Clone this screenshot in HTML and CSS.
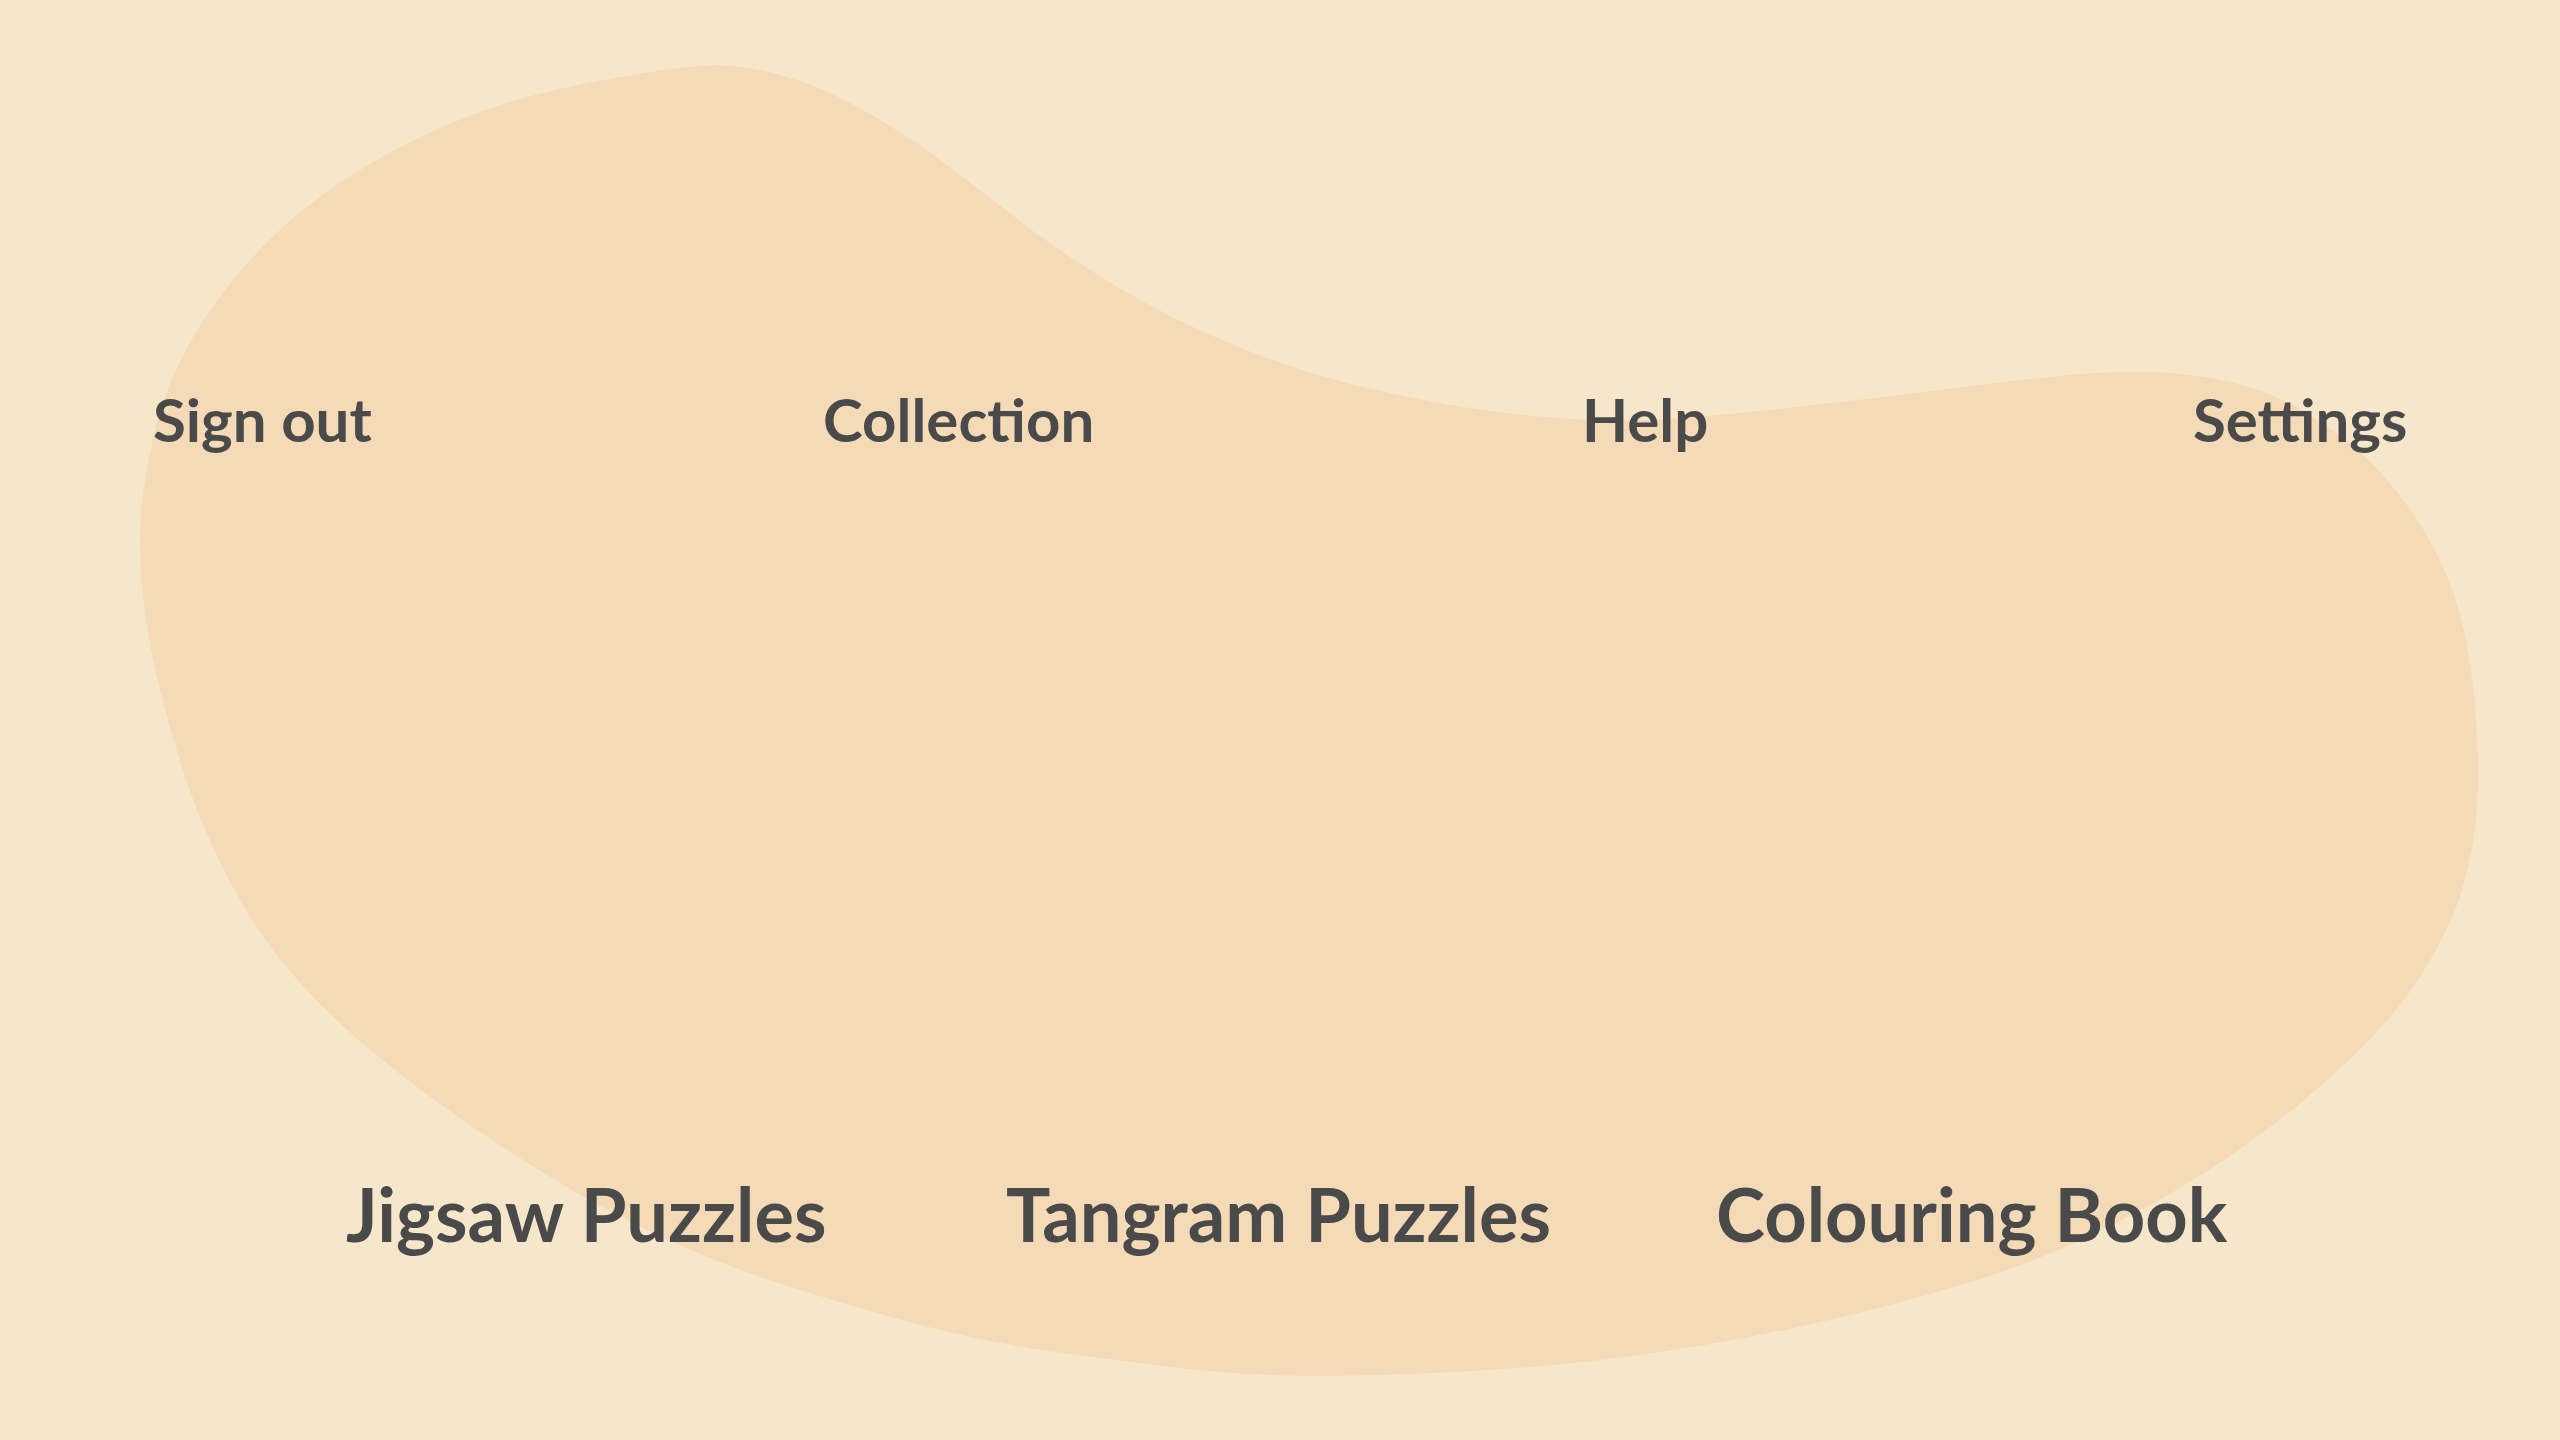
FILE: index.html
```html
<!DOCTYPE html>
<html lang="en">
<head>
<meta charset="utf-8">
<title>Puzzles</title>
<link rel="stylesheet" href="styles.css">
</head>
<body>
<div class="screen">
  <svg class="blob" width="2560" height="1440" viewBox="0 0 2560 1440" aria-hidden="true">
    <path fill="#F5DAB7" d="M620.5 77 Q702 62 734.5 66 Q767 70 800 81 Q833 92 873.5 116 Q914 140 947 165 Q980 190 1020.5 221.5 Q1061 253 1118.5 287.5 Q1176 322 1241 348 Q1306 374 1371.5 389 Q1437 404 1494 411.5 Q1551 419 1592 420 Q1633 421 1673.5 418.5 Q1714 416 1796 407 Q1878 398 1959.5 387.5 Q2041 377 2082 374 Q2123 371 2155.5 372 Q2188 373 2228.5 381.5 Q2269 390 2310 415 Q2351 440 2380.5 472.5 Q2410 505 2429.5 540 Q2449 575 2459.5 612.5 Q2470 650 2475 707 Q2480 764 2477 807 Q2474 850 2462 890 Q2450 930 2418 980 Q2386 1030 2310 1095 Q2240 1155 2146 1207.5 Q2060 1255 1969 1282.5 Q1878 1310 1796 1327.5 Q1714 1345 1632.5 1356 Q1551 1367 1453 1372 Q1355 1377 1289.5 1375.5 Q1224 1374 1162 1366 Q1100 1358 1050 1351 Q1000 1344 949 1332 Q898 1320 816.5 1295 Q735 1270 687.5 1248.5 Q640 1227 605 1208.5 Q570 1190 513.5 1154 Q457 1118 400 1074 Q343 1030 302 985 Q261 940 232.5 886.5 Q204 833 187.5 784 Q171 735 159 686 Q147 637 143 596 Q139 555 140.5 522.5 Q142 490 152.5 441 Q163 392 187.5 347 Q212 302 253 257 Q294 212 351 175.5 Q408 139 473.5 114.5 Q539 90 620.5 77 Z"/>
  </svg>
  <div class="content">
    <nav class="nav">
      <a class="nav-link" href="#">Sign out</a>
      <a class="nav-link" href="#">Collection</a>
      <a class="nav-link" href="#">Help</a>
      <a class="nav-link" href="#">Settings</a>
    </nav>
    <div class="games">
      <a class="game-link" href="#">Jigsaw Puzzles</a>
      <a class="game-link" href="#">Tangram Puzzles</a>
      <a class="game-link" href="#">Colouring Book</a>
    </div>
  </div>
</div>
</body>
</html>
```

FILE: styles.css
```css
html, body {
  margin: 0;
  padding: 0;
  background: #F6E6CA;
}

.screen {
  position: relative;
  width: 2560px;
  height: 1440px;
  overflow: hidden;
  background: #F6E6CA;
  font-family: "Lato", "Liberation Sans", sans-serif;
  font-weight: 700;
  color: #4A4A4A;
}

.blob {
  position: absolute;
  left: 0;
  top: 0;
}

.content {
  position: relative;
  display: flex;
  flex-direction: column;
  box-sizing: border-box;
  height: 100%;
  padding-top: 383px;
}

.nav {
  display: grid;
  grid-template-columns: 670px 759px 611px auto;
  padding-left: 153px;
}

.nav-link {
  font-size: 60px;
  line-height: 72px;
  color: inherit;
  text-decoration: none;
}

.games {
  display: grid;
  grid-template-columns: 660px 710px auto;
  padding-left: 346px;
  margin-top: 714px;
}

.game-link {
  font-size: 74px;
  line-height: 89px;
  color: inherit;
  text-decoration: none;
}
```
